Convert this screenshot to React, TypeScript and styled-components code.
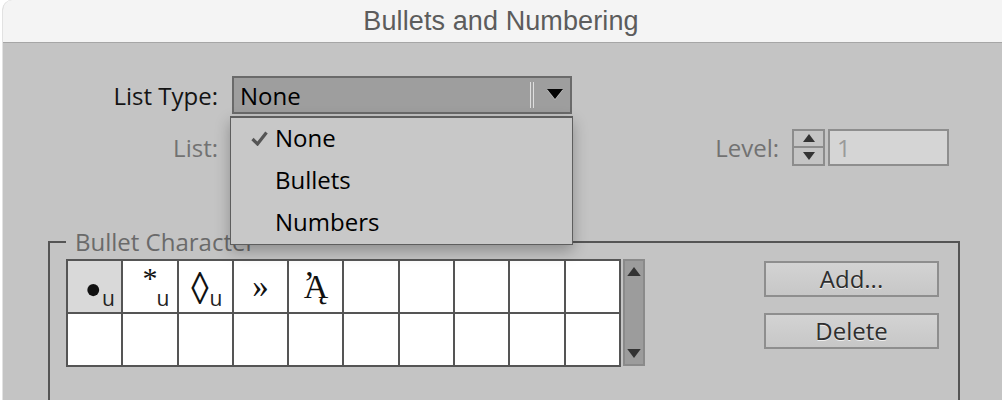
import React from "react";
import styled, { createGlobalStyle } from "styled-components";

const GlobalStyle = createGlobalStyle`
  html, body {
    margin: 0;
    padding: 0;
    background: #ffffff;
  }
  body {
    width: 1002px;
    height: 400px;
    overflow: hidden;
  }
`;

const uiFont = `"Open Sans", "Lato", sans-serif`;

const Window = styled.div`
  margin-left: 2px;
  height: 400px;
  background: #c4c4c4;
  border-left: 1px solid #e2e2e2;
  border-top-left-radius: 10px;
  overflow: hidden;
  font-family: ${uiFont};
`;

const TitleBar = styled.div`
  height: 42px;
  background: #f4f4f4;
  border-bottom: 1px solid #a6a6a6;
  display: flex;
  align-items: center;
  justify-content: center;
  font-family: "Liberation Sans", Arial, sans-serif;
  font-size: 27px;
  letter-spacing: 0.1px;
  color: #5c5c5c;
  padding-right: 3px;
`;

const Body = styled.div`
  padding-top: 33px;
  margin-left: -3px;
`;

const Row = styled.div<{ $mt?: number }>`
  display: flex;
  align-items: center;
  margin-top: ${({ $mt }) => $mt ?? 0}px;
`;

const Label = styled.div<{ $disabled?: boolean; $width?: number }>`
  width: ${({ $width }) => ($width ? `${$width}px` : "auto")};
  text-align: right;
  font-size: 24px;
  color: ${({ $disabled }) => ($disabled ? "#727272" : "#141414")};
  flex-shrink: 0;
`;

const SelectWrap = styled.div`
  position: relative;
  margin-left: 14px;
`;

const Select = styled.div`
  width: 340px;
  height: 38px;
  box-sizing: border-box;
  border: 2px solid #6a6a6a;
  background: #9e9e9e;
  display: flex;
  align-items: center;
  padding-left: 6px;
  font-size: 24px;
  color: #000;
`;

const SelectValue = styled.span`
  flex: 1;
`;

const Divider = styled.span`
  width: 4px;
  height: 26px;
  border-left: 1px solid #dedede;
  border-right: 1px solid #dedede;
  box-sizing: border-box;
  margin-right: 13px;
`;

const Caret = styled.svg`
  width: 16px;
  height: 12px;
  margin-right: 7px;
`;

const GhostSelect = styled.div`
  width: 340px;
  height: 38px;
  box-sizing: border-box;
  border: 2px solid #8a8a8a;
  background: #bdbdbd;
  margin-left: 14px;
`;

const Menu = styled.div`
  position: absolute;
  top: 40px;
  left: -2px;
  width: 343px;
  box-sizing: border-box;
  background: #c8c8c8;
  border: 1px solid #5e5e5e;
  border-top-width: 2px;
  box-shadow: 0 6px 14px rgba(0, 0, 0, 0.28);
  z-index: 10;
`;

const MenuItem = styled.div`
  height: 42px;
  box-sizing: border-box;
  padding: 0 0 3px 20px;
  display: flex;
  align-items: center;
  font-size: 24px;
  color: #000;
`;

const Check = styled.span`
  width: 24px;
  display: flex;
  align-items: center;
  padding-top: 2px;
`;

const Spacer = styled.div`
  flex: 1;
`;

const Stepper = styled.div`
  width: 33px;
  height: 37px;
  box-sizing: border-box;
  border: 2px solid #8c8c8c;
  margin-left: 13px;
  display: flex;
  flex-direction: column;
`;

const StepHalf = styled.div<{ $top?: boolean }>`
  flex: 1;
  display: flex;
  align-items: center;
  justify-content: center;
  border-bottom: ${({ $top }) => ($top ? "2px solid #8c8c8c" : "none")};
`;

const NumInput = styled.div`
  width: 121px;
  height: 37px;
  box-sizing: border-box;
  border: 2px solid #8e8e8e;
  background: #d5d5d5;
  margin-left: 3px;
  margin-right: 53px;
  display: flex;
  align-items: center;
  padding-left: 7px;
  font-size: 24px;
  color: #9a9a9a;
`;

const Group = styled.fieldset`
  margin: 63px 0 0 48px;
  width: 912px;
  box-sizing: border-box;
  border: 2px solid #555555;
  border-bottom: none;
  padding: 4px 0 60px 16px;
  display: flex;
  align-items: flex-start;
`;

const Legend = styled.legend`
  padding: 0 8px 0 9px;
  font-size: 24px;
  line-height: 26px;
  color: #6a6a6a;
`;

const Grid = styled.div`
  display: grid;
  grid-template-columns: repeat(10, 53.3px);
  grid-auto-rows: 51px;
  gap: 2px;
  padding: 2px;
  background: #555555;
`;

const Cell = styled.div<{ $selected?: boolean; $shift?: number }>`
  background: ${({ $selected }) => ($selected ? "#d9d9d9" : "#ffffff")};
  display: flex;
  align-items: center;
  justify-content: center;
  padding-left: ${({ $shift }) => $shift ?? 0}px;
  font-family: "Liberation Serif", "DejaVu Serif", serif;
  color: #111;
`;

const Glyph = styled.span<{ $size: number; $dy?: number; $sy?: number }>`
  font-size: ${({ $size }) => $size}px;
  line-height: 1;
  transform: translateY(${({ $dy }) => $dy ?? 0}px) scaleY(${({ $sy }) => $sy ?? 1});
`;

const Psili = styled.span`
  margin-right: -11px;
  position: relative;
  top: -3px;
`;

const Sub = styled.span<{ $gap?: number }>`
  align-self: flex-end;
  margin: 0 0 1px ${({ $gap }) => $gap ?? 1}px;
  font-family: ${uiFont};
  font-size: 21px;
  line-height: 1.2;
  color: #222;
`;

const Scrollbar = styled.div`
  width: 22px;
  height: 107px;
  box-sizing: border-box;
  border: 2px solid #8a8a8a;
  background: #9c9c9c;
  margin-left: 2px;
  display: flex;
  flex-direction: column;
  justify-content: space-between;
  align-items: center;
  padding: 6px 0;
`;

const Buttons = styled.div`
  margin-left: auto;
  margin-right: 19px;
  margin-top: 2px;
  display: flex;
  flex-direction: column;
  gap: 16px;
`;

const Button = styled.button`
  width: 175px;
  height: 36px;
  box-sizing: border-box;
  border: 2px solid #8e8e8e;
  background: linear-gradient(#d3d3d3, #c7c7c7);
  font-family: ${uiFont};
  font-size: 24px;
  color: #2e2e2e;
  text-shadow: 0 1px 0 #efefef;
  padding: 0;
  line-height: 1;
`;

const Tri = ({ up, color = "#333", w = 12, h = 8 }: { up?: boolean; color?: string; w?: number; h?: number }) => (
  <svg width={w} height={h} viewBox="0 0 12 8">
    {up ? <polygon points="0,8 12,8 6,0" fill={color} /> : <polygon points="0,0 12,0 6,8" fill={color} />}
  </svg>
);

type CellData = {
  glyph?: React.ReactNode;
  size?: number;
  dy?: number;
  sy?: number;
  shift?: number;
  sub?: boolean;
  subGap?: number;
  selected?: boolean;
};

const firstRow: CellData[] = [
  { glyph: "•", size: 50, dy: 3, sub: true, subGap: 0, selected: true, shift: 10 },
  { glyph: "*", size: 30, dy: -9, sub: true, subGap: -1, shift: 12 },
  { glyph: "◊", size: 35, dy: 3, sy: 1.3, sub: true, subGap: 1, shift: 3 },
  { glyph: "»", size: 33, dy: 0 },
  {
    glyph: (
      <>
        <Psili>ʼ</Psili>Ą
      </>
    ),
    size: 34,
    dy: 0,
  },
];

const cells: CellData[] = [...firstRow, ...Array.from({ length: 15 }, () => ({}))];

export default function App() {
  return (
    <>
      <GlobalStyle />
      <Window>
        <TitleBar>Bullets and Numbering</TitleBar>
        <Body>
          <Row>
            <Label $width={218}>List Type:</Label>
            <SelectWrap>
              <Select>
                <SelectValue>None</SelectValue>
                <Divider />
                <Caret viewBox="0 0 16 12">
                  <polygon points="0,1 16,1 8,11" fill="#f2f2f2" opacity="0.5" />
                  <polygon points="0,0 16,0 8,10" fill="#050505" />
                </Caret>
              </Select>
              <Menu>
                <MenuItem>
                  <Check>
                    <svg width="17" height="15" viewBox="0 0 17 15">
                      <path d="M1.5 8 L6.5 13 L15.5 1.5" stroke="#555" strokeWidth="3.2" fill="none" />
                    </svg>
                  </Check>
                  None
                </MenuItem>
                <MenuItem>
                  <Check />
                  Bullets
                </MenuItem>
                <MenuItem>
                  <Check />
                  Numbers
                </MenuItem>
              </Menu>
            </SelectWrap>
          </Row>
          <Row $mt={14}>
            <Label $width={218} $disabled>
              List:
            </Label>
            <GhostSelect />
            <Spacer />
            <Label $disabled>Level:</Label>
            <Stepper>
              <StepHalf $top>
                <Tri up />
              </StepHalf>
              <StepHalf>
                <Tri />
              </StepHalf>
            </Stepper>
            <NumInput>1</NumInput>
          </Row>
          <Group>
            <Legend>Bullet Character</Legend>
            <Grid>
              {cells.map((c, i) => (
                <Cell key={i} $selected={c.selected} $shift={c.shift}>
                  {c.glyph && (
                    <Glyph $size={c.size ?? 30} $dy={c.dy} $sy={c.sy}>
                      {c.glyph}
                    </Glyph>
                  )}
                  {c.sub && <Sub $gap={c.subGap}>u</Sub>}
                </Cell>
              ))}
            </Grid>
            <Scrollbar>
              <Tri up w={14} h={9} />
              <Tri w={14} h={9} />
            </Scrollbar>
            <Buttons>
              <Button>Add...</Button>
              <Button>Delete</Button>
            </Buttons>
          </Group>
        </Body>
      </Window>
    </>
  );
}
